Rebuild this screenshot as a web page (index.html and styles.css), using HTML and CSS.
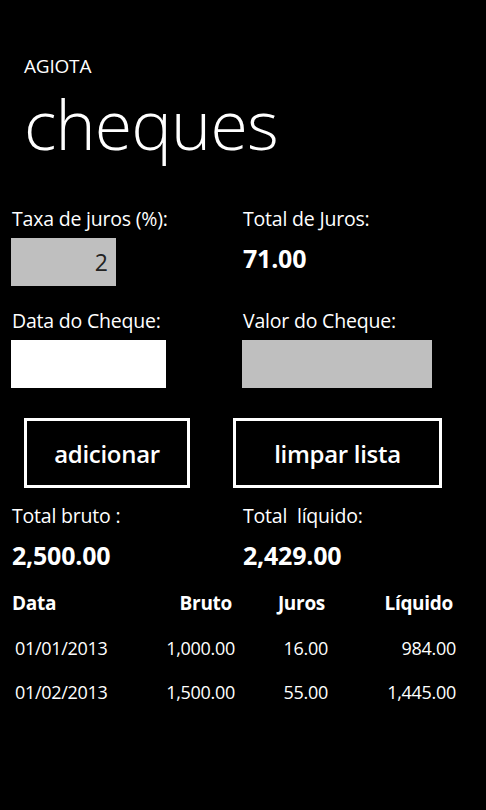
FILE: index.html
```html
<!DOCTYPE html>
<html lang="pt">
<head>
  <meta charset="UTF-8" />
  <meta name="viewport" content="width=device-width, initial-scale=1.0"/>
  <title>Agiota - cheques</title>
  <link rel="stylesheet" href="styles.css">
</head>
<body>
  <div class="title-panel">
    <div class="app-title">AGIOTA</div>
    <div class="page-title">cheques</div>
  </div>

  <div class="content">
    <div class="form-grid">
      <div class="field">
        <div class="label">Taxa de juros (%):</div>
        <div class="textbox grey small">2</div>
      </div>
      <div class="field">
        <div class="label">Total de Juros:</div>
        <div class="value">71.00</div>
      </div>
      <div class="field">
        <div class="label">Data do Cheque:</div>
        <div class="textbox white medium"></div>
      </div>
      <div class="field">
        <div class="label">Valor do Cheque:</div>
        <div class="textbox grey large"></div>
      </div>
    </div>

    <div class="buttons">
      <button class="btn btn-add">adicionar</button>
      <button class="btn btn-clear">limpar lista</button>
    </div>

    <div class="totals">
      <div class="field">
        <div class="label">Total bruto :</div>
        <div class="value">2,500.00</div>
      </div>
      <div class="field">
        <div class="label">Total&nbsp; líquido:</div>
        <div class="value">2,429.00</div>
      </div>
    </div>

    <div class="list">
      <div class="list-row list-head">
        <span>Data</span>
        <span>Bruto</span>
        <span>Juros</span>
        <span>Líquido</span>
      </div>
      <div class="list-row">
        <span>01/01/2013</span>
        <span>1,000.00</span>
        <span>16.00</span>
        <span>984.00</span>
      </div>
      <div class="list-row">
        <span>01/02/2013</span>
        <span>1,500.00</span>
        <span>55.00</span>
        <span>1,445.00</span>
      </div>
    </div>
  </div>
</body>
</html>
```

FILE: styles.css
```css
body {
  margin: 0;
  padding: 0;
  background: black;
  color: white;
  font-family: 'Open Sans', 'Noto Sans', sans-serif;
  width: 486px;
  height: 810px;
  overflow: hidden;
}
.title-panel {
  padding: 52px 0 0 24px;
}
.app-title {
  font-size: 19px;
  line-height: 28px;
  letter-spacing: -0.2px;
}
.page-title {
  font-size: 68px;
  font-weight: 300;
  line-height: 80px;
  letter-spacing: -0.8px;
  margin-top: 4px;
}
.content {
  padding: 42px 0 0 11px;
}
.form-grid,
.totals {
  display: grid;
  grid-template-columns: 231px 1fr;
  row-gap: 22px;
}
.label {
  font-size: 19.5px;
  line-height: 26px;
  padding-left: 1px;
  letter-spacing: -0.2px;
}
.textbox {
  height: 48px;
  margin-top: 6px;
  box-sizing: border-box;
  font-size: 23px;
  line-height: 48px;
  text-align: right;
  padding-right: 8px;
  color: #222;
}
.grey { background: #bfbfbf; }
.white { background: #ffffff; }
.small { width: 105px; }
.medium { width: 155px; }
.large { width: 190px; }
.value {
  font-size: 25px;
  font-weight: 700;
  line-height: 30px;
  padding-left: 1px;
  margin-top: 11px;
  letter-spacing: -0.2px;
}
.buttons {
  display: flex;
  gap: 43px;
  margin-top: 30px;
  padding-left: 13px;
}
.btn {
  background: black;
  color: white;
  border: 3px solid white;
  height: 70px;
  font-family: inherit;
  font-size: 24px;
  font-weight: 600;
  letter-spacing: -0.3px;
  padding: 0;
  cursor: pointer;
}
.btn-add { width: 166px; }
.btn-clear { width: 209px; }
.totals {
  margin-top: 15px;
}
.list {
  margin-top: 20px;
  padding-left: 1px;
}
.list-row {
  display: grid;
  grid-template-columns: 120px 100px 93px 128px;
  font-size: 18px;
  line-height: 44px;
  padding-left: 3px;
  letter-spacing: -0.3px;
}
.list-row span:not(:first-child) {
  text-align: right;
}
.list-head {
  font-size: 19px;
  font-weight: 700;
  padding-left: 0;
  line-height: 26px;
  margin-bottom: 10px;
}
```
